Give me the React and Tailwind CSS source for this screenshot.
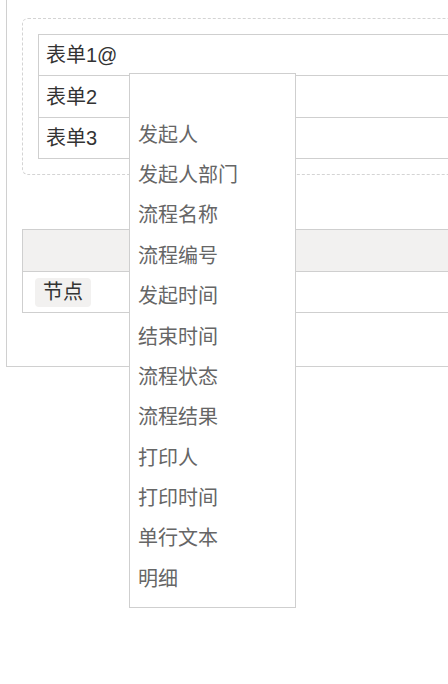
const forms = ["表单1@", "表单2", "表单3"];

const fields = [
  "",
  "发起人",
  "发起人部门",
  "流程名称",
  "流程编号",
  "发起时间",
  "结束时间",
  "流程状态",
  "流程结果",
  "打印人",
  "打印时间",
  "单行文本",
  "明细",
];

export default function App() {
  return (
    <div
      className="relative w-[448px] h-[684px] overflow-hidden bg-white"
      style={{ fontFamily: '"Liberation Sans", "Noto Sans CJK SC", sans-serif' }}
    >
      {/* outer panel */}
      <div className="ml-[6px] mt-[-20px] w-[700px] border border-[#d0d0d0] pt-[37px] pl-[15px] pb-[53px]">
        {/* dashed form box */}
        <div className="border border-dashed border-[#d4d4d4] rounded-[6px] p-[15px]">
          <div className="border border-[#cfcfcf] border-b-0">
            {forms.map((f, i) => (
              <div
                key={f}
                className={`${i === 1 ? "h-[42px]" : "h-[41px]"} border-b border-[#cfcfcf] pl-[7px] flex items-center text-[20px] text-[#333]`}
              >
                {f}
              </div>
            ))}
          </div>
        </div>

        {/* node table */}
        <div className="mt-[54px] border border-[#cfcfcf]">
          <div className="h-[42px] bg-[#f2f1f0] border-b border-[#cfcfcf]" />
          <div className="h-[40px] flex items-center pl-[12px]">
            <span className="bg-[#f2f1f0] rounded-[4px] px-[8px] h-[29px] flex items-center text-[20px] text-[#333]">
              节点
            </span>
          </div>
        </div>
      </div>

      {/* @ mention dropdown */}
      <div className="absolute left-[129px] top-[73px] w-[167px] h-[535px] border border-[#cfcfcf] bg-white">
        {fields.map((f, i) => (
          <div
            key={i}
            className="h-[40.4px] pl-[8px] flex items-center text-[20px] text-[#666]"
          >
            {f}
          </div>
        ))}
      </div>
    </div>
  );
}
